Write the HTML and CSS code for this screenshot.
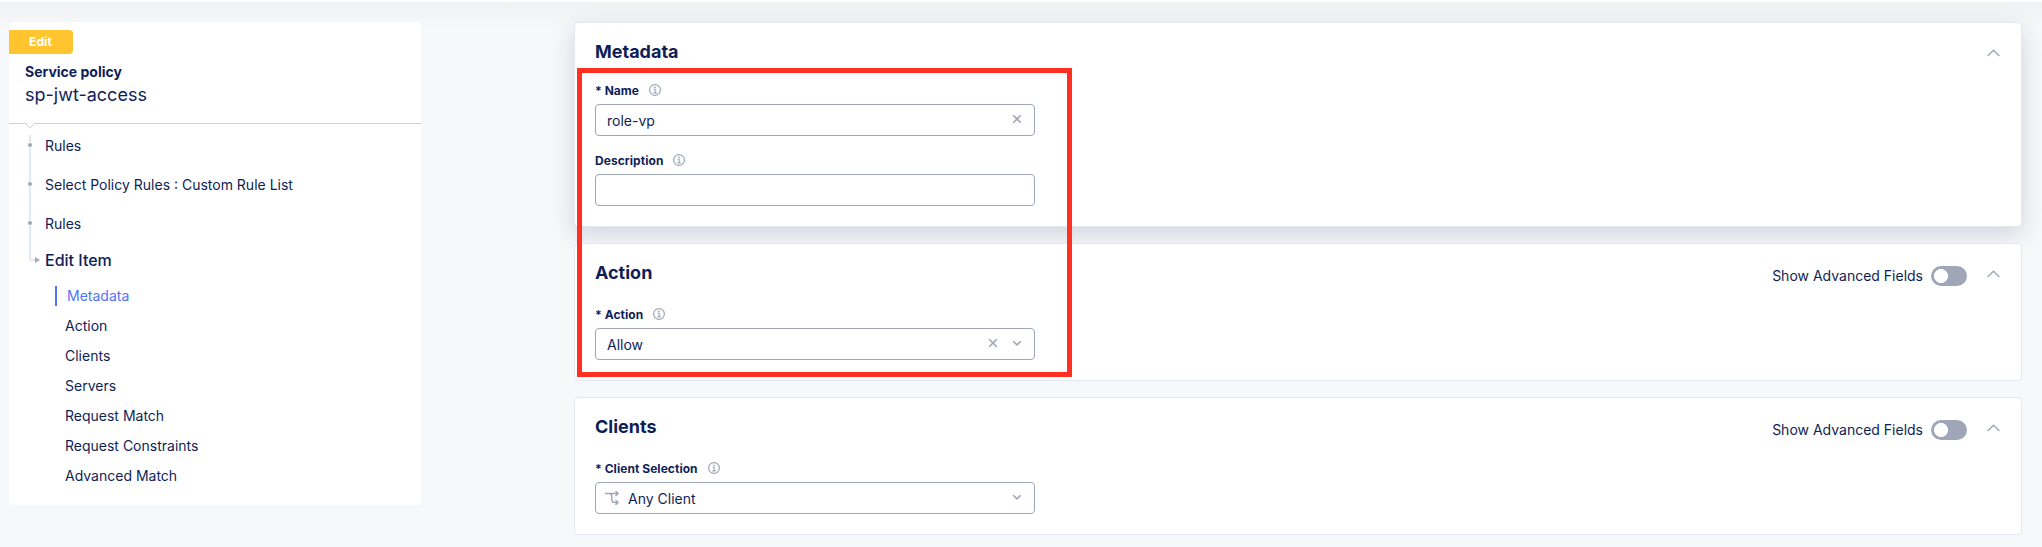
FILE: index.html
```html
<!DOCTYPE html>
<html lang="en">
<head>
<meta charset="utf-8">
<title>Service policy</title>
<link rel="stylesheet" href="styles.css">
</head>
<body>
<svg class="sprite" aria-hidden="true">
  <symbol id="info" viewBox="0 0 12 12"><circle cx="6" cy="6" r="5.4" fill="none" stroke="currentColor" stroke-width="1.2"/><path d="M4.6 5.3H6.200V8.800M4.300 8.900H7.800" fill="none" stroke="currentColor" stroke-width="1.1"/><circle cx="6" cy="3.3" r=".9" fill="currentColor"/></symbol>
  <symbol id="close" viewBox="0 0 10 10"><path d="M1.2 1.2 8.8 8.8M8.8 1.2 1.2 8.8" fill="none" stroke="currentColor" stroke-width="1.6"/></symbol>
  <symbol id="down" viewBox="0 0 10 10"><path d="M1.2 3.200 5 6.900 8.800 3.200" fill="none" stroke="currentColor" stroke-width="1.6"/></symbol>
  <symbol id="up" viewBox="0 0 13 8"><path d="M.6 7 6.500 1.300 12.400 7" fill="none" stroke="currentColor" stroke-width="1.4"/></symbol>
  <symbol id="branch" viewBox="0 0 14 14"><path d="M0 2.500H13M10.500 0 13 2.500 10.500 5M4.500 2.500C6.300 2.800 6.800 3.800 6.800 5.500V8.500C6.800 10.500 8 11.500 9.500 11.500H13M10.500 9 13 11.500 10.500 14" fill="none" stroke="currentColor" stroke-width="1.4"/></symbol>
</svg>
<div class="page">
  <aside class="sidebar">
    <span class="badge">Edit</span>
    <div class="kind">Service policy</div>
    <div class="name">sp-jwt-access</div>
    <svg class="divider" width="412" height="6"><path d="M0 .5H16.500L21 5 25.500 .5H412" fill="none" stroke="#cbd1dd"/></svg>
    <div class="trail">
      <svg class="track" width="12" height="132"><path d="M3 1V124Q3 126 5 126H8" fill="none" stroke="#e4e7f4" stroke-width="2"/><g fill="#9ea6b8" stroke="#fff"><circle cx="3" cy="11" r="2.500"/><circle cx="3" cy="50" r="2.500"/><circle cx="3" cy="89" r="2.500"/></g><path d="M8 123 13 126 8 129Z" fill="#a3abbc"/></svg>
      <div class="crumbs">
        <a class="crumb">Rules</a>
        <a class="crumb">Select Policy Rules : Custom Rule List</a>
        <a class="crumb">Rules</a>
        <a class="crumb current">Edit Item</a>
      </div>
    </div>
    <nav class="sections">
      <a class="active">Metadata</a>
      <a>Action</a>
      <a>Clients</a>
      <a>Servers</a>
      <a>Request Match</a>
      <a>Request Constraints</a>
      <a>Advanced Match</a>
    </nav>
  </aside>
  <main class="content">
    <section class="card raised">
      <header class="head"><h2>Metadata</h2><svg class="up"><use href="#up"/></svg></header>
      <div class="field">
        <label>* Name <svg class="info"><use href="#info"/></svg></label>
        <div class="input"><span class="value">role-vp</span><svg class="small"><use href="#close"/></svg></div>
      </div>
      <div class="field">
        <label>Description <svg class="info"><use href="#info"/></svg></label>
        <div class="input"></div>
      </div>
    </section>
    <section class="card">
      <header class="head"><h2>Action</h2><span class="adv">Show Advanced Fields</span><span class="toggle"></span><svg class="up"><use href="#up"/></svg></header>
      <div class="field">
        <label>* Action <svg class="info"><use href="#info"/></svg></label>
        <div class="input"><span class="value">Allow</span><svg class="small"><use href="#close"/></svg><svg class="small"><use href="#down"/></svg></div>
      </div>
    </section>
    <section class="card">
      <header class="head"><h2>Clients</h2><span class="adv">Show Advanced Fields</span><span class="toggle"></span><svg class="up"><use href="#up"/></svg></header>
      <div class="field">
        <label>* Client Selection <svg class="info"><use href="#info"/></svg></label>
        <div class="input choice"><svg class="branch"><use href="#branch"/></svg><span class="value">Any Client</span><svg class="small"><use href="#down"/></svg></div>
      </div>
    </section>
  </main>
</div>
<div class="highlight"></div>
</body>
</html>
```
FILE: styles.css
```css
* { box-sizing: border-box; }
body { margin: 0; height: 547px; overflow: hidden; position: relative; background: linear-gradient(#fff 2px, #f0f1f3 2px, #f7f8fa 28px, #f7f8fa); font: 14px/20px Inter, sans-serif; color: #0f1e57; }
.sprite { display: none; }
svg { display: block; flex: none; }
.page { display: flex; align-items: flex-start; gap: 153px; padding: 22px 20px 0 9px; }
.sidebar { width: 412px; height: 483px; padding-top: 8px; background: #fff; border-radius: 4px; }
.badge { display: block; width: 64px; height: 24px; padding-left: 20px; background: #ffc42e; border-radius: 0 4px 4px 0; color: #fff; font-size: 12px; font-weight: 700; line-height: 24px; letter-spacing: .1px; }
.kind { margin: 8px 0 0 16px; font-weight: 700; }
.name { margin: 0 0 0 16px; font-size: 18px; line-height: 26px; }
.divider { margin-top: 15px; }
.trail { display: flex; margin: 5px 0 0 18px; }
.track { overflow: visible; }
.crumbs { display: flex; flex-direction: column; padding: 2px 0 0 6px; gap: 19px; }
.current { margin-top: -3px; font-size: 16px; font-weight: 500; }
.sections { display: flex; flex-direction: column; gap: 10px; padding: 16px 0 0 46px; }
.sections a { padding-left: 10px; }
.sections .active { border-left: 2px solid #4f73ff; color: #4f73ff; }
.content { flex: 1; display: grid; gap: 16px; }
.card { background: #fff; border: 1px solid #e4e7f2; border-radius: 4px; padding: 17px 19px 20px 20px; }
.raised { box-shadow: 0 8px 24px rgba(20, 28, 75, .16); }
.head { display: flex; align-items: center; height: 24px; margin-bottom: 22px; }
.raised .head { margin-bottom: 19px; }
h2 { flex: 1; margin: 0; font-size: 18px; font-weight: 700; line-height: 24px; }
.adv { margin-right: 8px; padding-top: 6px; }
.toggle { width: 36px; height: 20px; margin: 6px 20px 0 0; border-radius: 10px; background: radial-gradient(circle at 10px 10px, #fff 6.7px, #9ea6b8 7.3px); }
.up { width: 13px; height: 8px; margin: 1px 2px 0 0; color: #9ea6b8; }
.field { width: 440px; }
.field + .field { margin-top: 17px; }
label { display: flex; gap: 10px; margin-bottom: 5px; font-size: 12px; font-weight: 700; line-height: 16px; letter-spacing: .05px; }
.info { width: 12px; height: 12px; margin-top: 1px; color: #9ea6b8; }
.input { display: flex; align-items: center; gap: 14px; height: 32px; padding: 0 12px 0 11px; border: 1px solid #9ea6b8; border-radius: 4px; }
.value { flex: 1; padding-top: 2px; }
.small { width: 10px; height: 10px; margin-bottom: 2px; color: #9ea6b8; }
.choice { gap: 9px; padding-left: 9px; }
.branch { width: 14px; height: 14px; color: #9ea6b8; }
.highlight { position: absolute; left: 577px; top: 68px; width: 495px; height: 309px; border: 5px solid #ff3021; }
```
